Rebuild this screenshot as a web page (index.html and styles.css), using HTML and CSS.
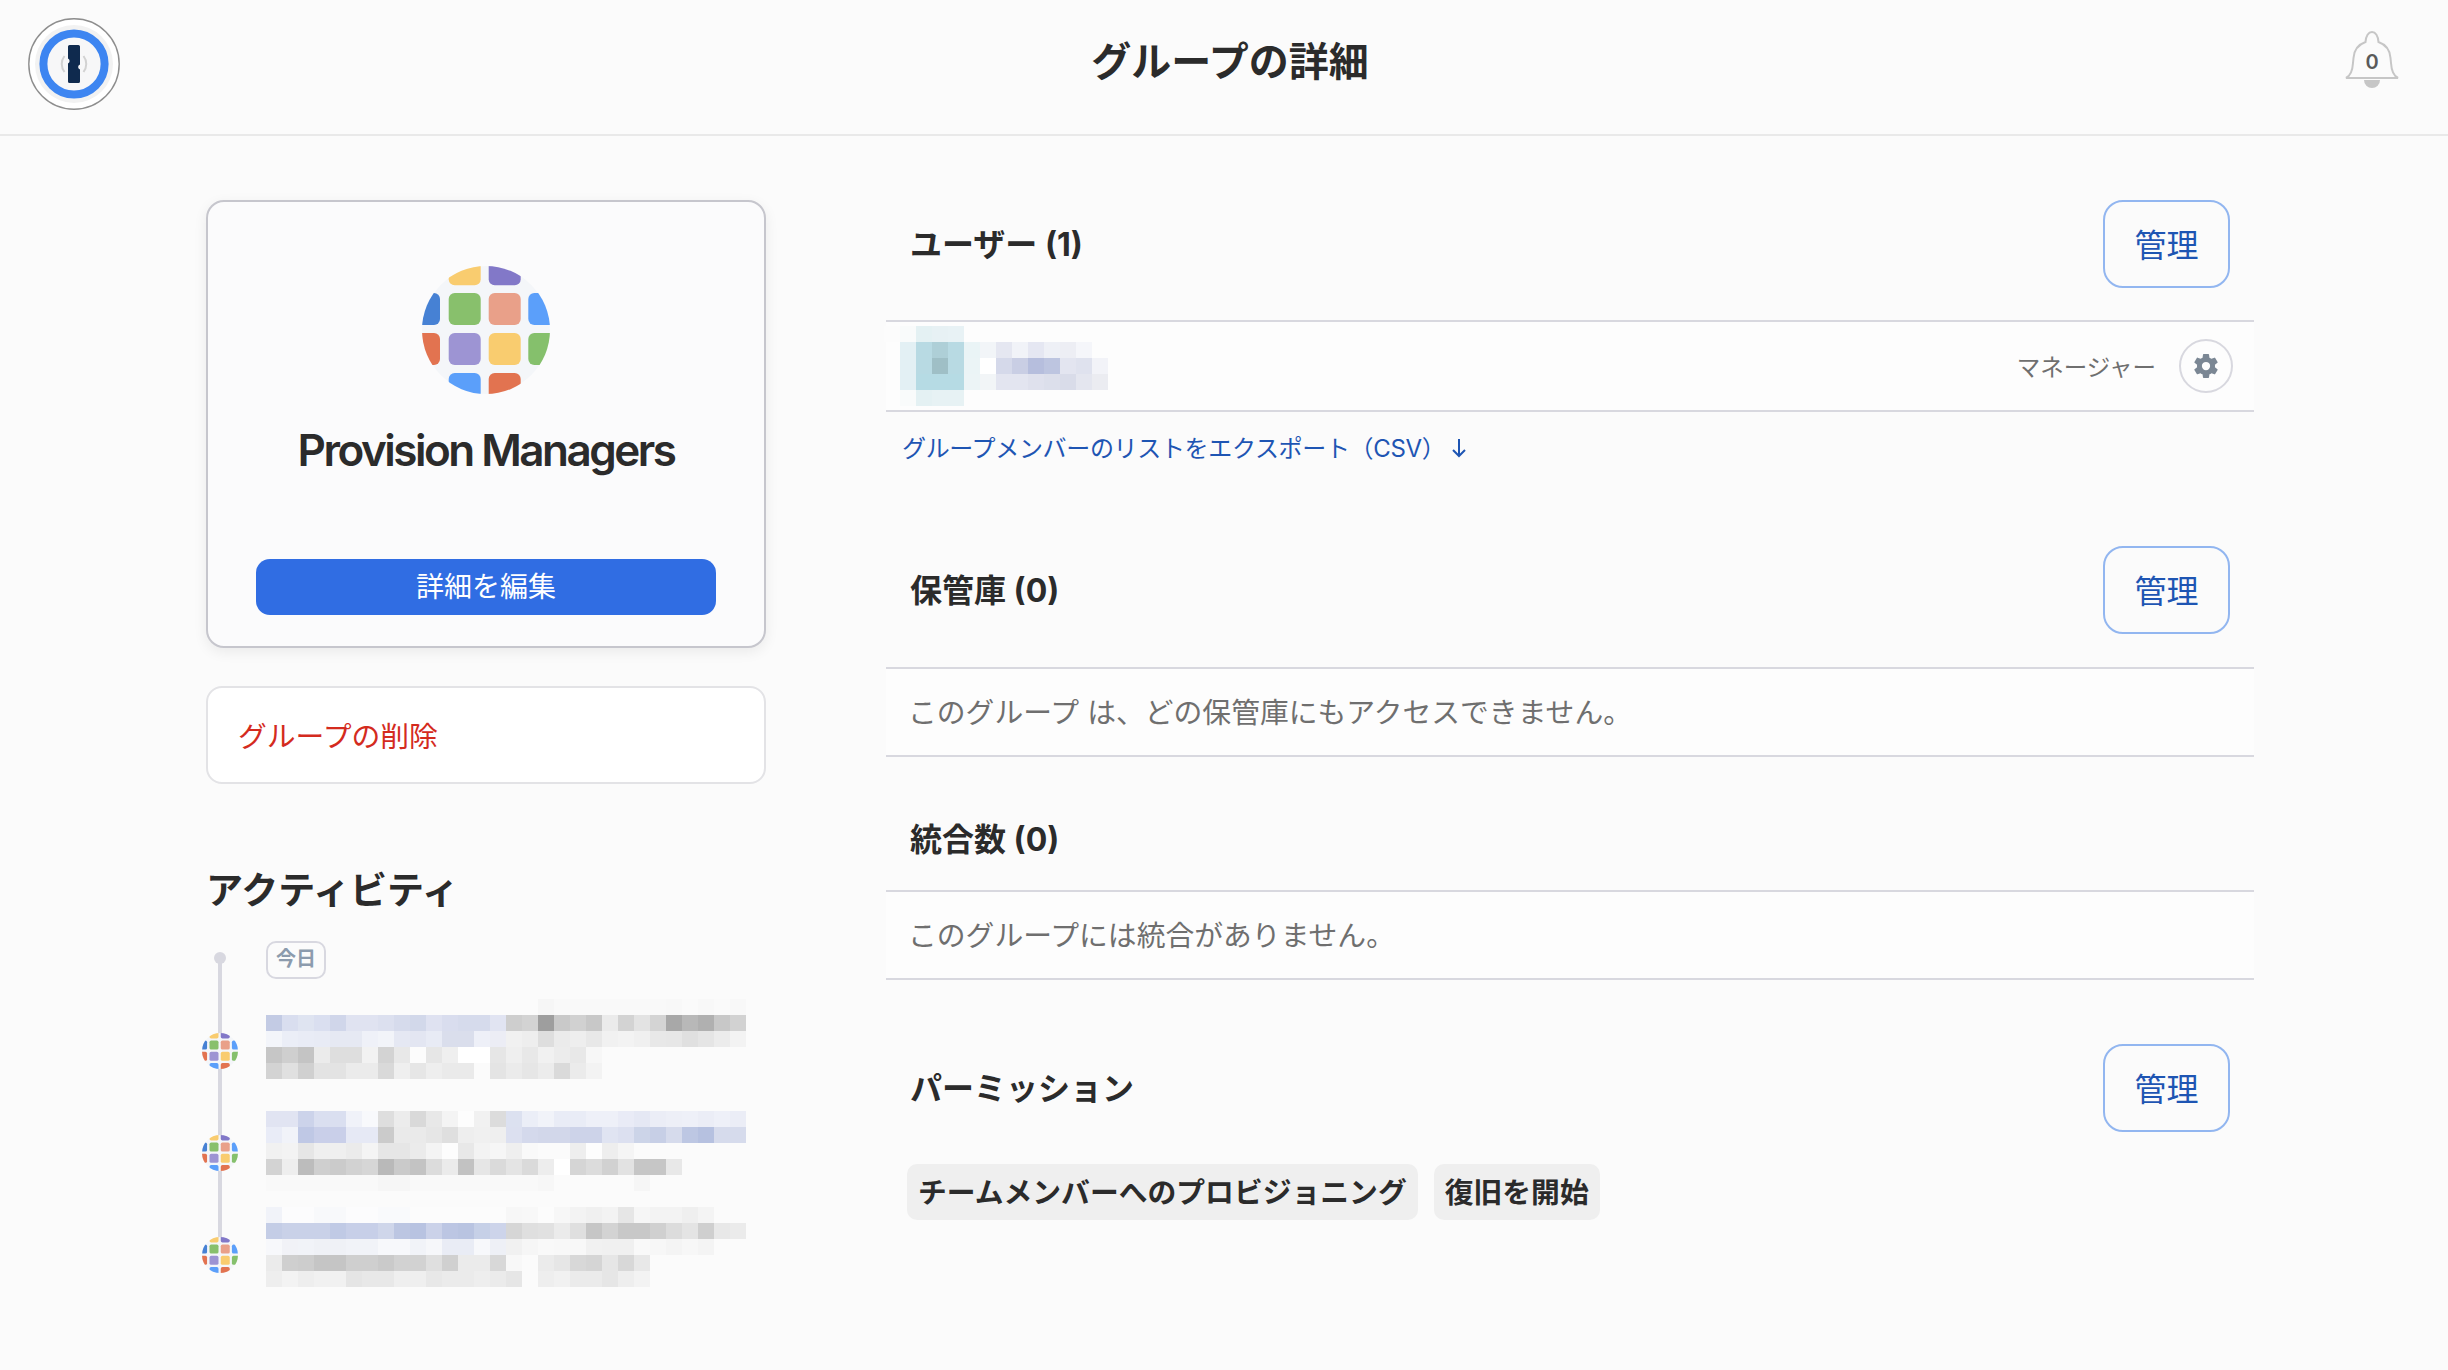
FILE: index.html
```html
<!DOCTYPE html>
<html lang="ja">
<head>
<meta charset="utf-8">
<title>グループの詳細</title>
<link rel="stylesheet" href="styles.css">
</head>
<body>
<svg class="defs" width="0" height="0" aria-hidden="true">
  <defs>
    <clipPath id="globe-clip"><circle cx="64" cy="64" r="64"/></clipPath>
    <symbol id="globe" viewBox="0 0 128 128">
      <g clip-path="url(#globe-clip)">
        <circle cx="64" cy="64" r="64" fill="#f4f6f9"/>
        <rect x="26.7" y="-13" width="32" height="32.3" rx="6" fill="#f9cc6f"/>
        <rect x="66.7" y="-13" width="32" height="32.3" rx="6" fill="#8278c8"/>
        <rect x="-14" y="27" width="32" height="32" rx="6" fill="#4681d4"/>
        <rect x="26.7" y="27" width="32" height="32" rx="6" fill="#88c06c"/>
        <rect x="66.7" y="27" width="32" height="32" rx="6" fill="#e9a089"/>
        <rect x="106.3" y="27" width="32" height="32" rx="6" fill="#5b9ffa"/>
        <rect x="-14" y="67" width="32" height="32" rx="6" fill="#e27350"/>
        <rect x="26.7" y="67" width="32" height="32" rx="6" fill="#9d94d3"/>
        <rect x="66.7" y="67" width="32" height="32" rx="6" fill="#f9cc6f"/>
        <rect x="106.3" y="67" width="32" height="32" rx="6" fill="#85c06c"/>
        <rect x="26.7" y="107" width="32" height="32" rx="6" fill="#5b9ffa"/>
        <rect x="66.7" y="107" width="32" height="32" rx="6" fill="#e27350"/>
      </g>
    </symbol>
  </defs>
</svg>

<header class="topbar">
  <svg class="logo" viewBox="0 0 92 92" aria-label="1Password">
    <circle cx="46" cy="46" r="45.2" fill="#fff" stroke="#8e8e8e" stroke-width="1.4"/>
    <circle cx="46" cy="46" r="39" fill="#f2f2f2"/>
    <circle cx="46" cy="46" r="30.6" fill="#f7f7f8" stroke="#3d85f1" stroke-width="8"/>
    <path d="M36.5 38a13 13 0 0 0 0 16M55.5 38a13 13 0 0 1 0 16" fill="none" stroke="#d2d2d2" stroke-width="2"/>
    <path d="M41.6 27h8.8a1.6 1.6 0 0 1 1.6 1.6V46.6a2.6 2.6 0 0 0 0 5V63.4a1.6 1.6 0 0 1-1.6 1.6h-8.8a1.6 1.6 0 0 1-1.6-1.6V45.4a2.6 2.6 0 0 0 0-4.8V28.6a1.6 1.6 0 0 1 1.6-1.6z" fill="#0f2a4e"/>
  </svg>
  <h1 class="page-title">グループの詳細</h1>
  <div class="bell">
    <svg class="bell-icon" viewBox="0 0 64 64" aria-hidden="true">
      <path d="M6 50c4-2 6.500-7 7-15l.5-5c.5-8 5-13.500 12-16 .3-6 3-10 6.500-10s6.200 4 6.500 10c7 2.500 11.500 8 12 16l.5 5c.5 8 3 13 7 15z" fill="none" stroke="#c6c6c6" stroke-width="2"/>
      <path d="M24 52h16a8 8 0 0 1-16 0z" fill="#c6c6c6"/>
    </svg>
    <span class="bell-count">0</span>
  </div>
</header>

<main class="page">
  <aside class="side">
    <section class="group-card">
      <svg class="group-globe"><use href="#globe"/></svg>
      <h2 class="group-name">Provision Managers</h2>
      <button class="btn-primary">詳細を編集</button>
    </section>
    <div class="danger-card">グループの削除</div>
    <h2 class="activity-title">アクティビティ</h2>
    <div class="timeline">
      <div class="rail">
        <span class="rail-dot"></span>
        <svg class="rail-avatar"><use href="#globe"/></svg>
        <svg class="rail-avatar"><use href="#globe"/></svg>
        <svg class="rail-avatar"><use href="#globe"/></svg>
      </div>
      <div class="events">
        <span class="day-badge">今日</span>
        <div class="event event-1">
          <div class="px a0"></div><div class="px a1"></div><div class="px a2"></div><div class="px a3"></div><div class="px a4"></div>
        </div>
        <div class="event event-2">
          <div class="px b0"></div><div class="px b1"></div><div class="px b2"></div><div class="px b3"></div><div class="px b4"></div>
        </div>
        <div class="event event-3">
          <div class="px c0"></div><div class="px c1"></div><div class="px c2"></div><div class="px c3"></div><div class="px c4"></div>
        </div>
      </div>
    </div>
  </aside>

  <div class="content">
    <section class="sec sec-users">
      <div class="sec-head">
        <h3 class="sec-title">ユーザー (1)</h3>
        <a class="btn-outline">管理</a>
      </div>
      <div class="row row-user">
        <div class="user-blur">
          <div class="px u0"></div><div class="px u1"></div><div class="px u2"></div><div class="px u3"></div><div class="px u4"></div>
        </div>
        <span class="role">マネージャー</span>
        <span class="gear-btn">
          <svg class="gear" viewBox="0 0 24 24" aria-hidden="true"><path fill-rule="evenodd" d="M19.14 12.94c.04-.3.06-.61.06-.94 0-.32-.02-.64-.07-.94l2.03-1.58a.49.49 0 0 0 .12-.61l-1.92-3.32a.488.488 0 0 0-.59-.22l-2.39.96c-.5-.38-1.03-.7-1.62-.94l-.36-2.54a.484.484 0 0 0-.48-.41h-3.84c-.24 0-.43.17-.47.41l-.36 2.54c-.59.24-1.13.57-1.62.94l-2.39-.96c-.22-.08-.47 0-.59.22L2.74 8.87c-.12.21-.08.47.12.61l2.03 1.58c-.05.3-.09.63-.09.94s.02.64.07.94l-2.03 1.58a.49.49 0 0 0-.12.61l1.92 3.32c.12.22.37.29.59.22l2.39-.96c.5.38 1.03.7 1.62.94l.36 2.54c.05.24.24.41.48.41h3.84c.24 0 .44-.17.47-.41l.36-2.54c.59-.24 1.13-.56 1.62-.94l2.39.96c.22.08.47 0 .59-.22l1.92-3.32c.12-.22.07-.47-.12-.61l-2.01-1.58zM12 15.3a3.300 3.300 0 1 1 0-6.600 3.300 3.300 0 0 1 0 6.600z"/></svg>
        </span>
      </div>
      <a class="export-link">グループメンバーのリストをエクスポート（CSV）<svg class="arrow" viewBox="0 0 16 20" aria-hidden="true"><path d="M8 1v17M2 12l6 6 6-6" fill="none" stroke="currentColor" stroke-width="2"/></svg></a>
    </section>

    <section class="sec sec-vaults">
      <div class="sec-head">
        <h3 class="sec-title">保管庫 (0)</h3>
        <a class="btn-outline">管理</a>
      </div>
      <div class="row row-text">このグループ は、どの保管庫にもアクセスできません。</div>
    </section>

    <section class="sec sec-integrations">
      <div class="sec-head sec-head-plain">
        <h3 class="sec-title">統合数 (0)</h3>
      </div>
      <div class="row row-text">このグループには統合がありません。</div>
    </section>

    <section class="sec sec-perms">
      <div class="sec-head">
        <h3 class="sec-title">パーミッション</h3>
        <a class="btn-outline">管理</a>
      </div>
      <div class="chips">
        <span class="chip">チームメンバーへのプロビジョニング</span>
        <span class="chip">復旧を開始</span>
      </div>
    </section>
  </div>
</main>
</body>
</html>
```
FILE: styles.css
```css
* { box-sizing: border-box; }
html, body { margin: 0; padding: 0; }
body {
  background: #fbfbfb;
  color: #2b2b2b;
  font-family: Inter, "Noto Sans CJK JP", sans-serif;
  overflow: hidden;
  height: 1370px;
}
h1, h2, h3 { margin: 0; }
.defs { position: absolute; }

/* top bar */
.topbar {
  height: 136px;
  border-bottom: 2px solid #e9e9e9;
  display: flex;
  align-items: center;
  justify-content: space-between;
  padding: 0 44px 10px 28px;
}
.logo { width: 92px; height: 92px; margin-top: 4px; flex: none; }
.page-title { font-size: 40px; line-height: 56px; font-weight: 700; }
.bell { position: relative; width: 64px; height: 64px; margin-top: -4px; flex: none; }
.bell-icon { width: 64px; height: 64px; display: block; }
.bell-count {
  position: absolute;
  left: 0; right: 0; top: 22px;
  text-align: center;
  font-size: 20px;
  line-height: 24px;
  font-weight: 600;
  color: #5a5a5a;
}

/* layout */
.page { display: flex; gap: 120px; padding: 64px 194px 0 206px; }
.side { width: 560px; flex: none; }
.content { width: 1368px; flex: none; }

/* left column */
.group-card {
  height: 448px;
  border: 2px solid #c6c6cd;
  border-radius: 18px;
  background: #fbfbfc;
  box-shadow: 0 4px 14px rgba(0, 0, 0, .07);
  padding: 64px 48px 0;
  display: flex;
  flex-direction: column;
  align-items: center;
}
.group-globe { width: 128px; height: 128px; display: block; flex: none; }
.group-name {
  margin-top: 28px;
  font-size: 44px;
  line-height: 56px;
  font-weight: 600;
  letter-spacing: -2.5px;
  white-space: nowrap;
}
.btn-primary {
  margin-top: 81px;
  width: 460px;
  height: 56px;
  border: 0;
  border-radius: 14px;
  background: #306de3;
  color: #fff;
  font: 400 28px/56px Inter, "Noto Sans CJK JP", sans-serif;
  padding: 0;
}
.danger-card {
  margin-top: 38px;
  height: 98px;
  border: 2px solid #e3e3e6;
  border-radius: 16px;
  background: #fff;
  padding: 0 30px 2px;
  display: flex;
  align-items: center;
  color: #d42b1e;
  font-size: 28.8px;
}
.activity-title {
  margin-top: 83px;
  font-size: 37px;
  line-height: 48px;
  font-weight: 700;
}
.timeline { display: flex; margin: 27px 0 0 -4px; gap: 28px; }
.rail {
  position: relative;
  width: 36px;
  flex: none;
  display: flex;
  flex-direction: column;
  align-items: center;
  padding-top: 10px;
  gap: 66px;
}
.rail::before {
  content: "";
  position: absolute;
  left: 16px;
  top: 16px;
  width: 4px;
  height: 297px;
  background: #d8d8e0;
}
.rail-dot {
  position: relative;
  width: 12px;
  height: 12px;
  border-radius: 50%;
  background: #d8d8e0;
  margin-bottom: 3px;
}
.rail-avatar { position: relative; width: 36px; height: 36px; display: block; flex: none; }
.events { width: 480px; flex: none; }
.day-badge {
  display: block;
  width: 60px;
  height: 38px;
  margin-top: -1px;
  border: 2px solid #d8d8e0;
  border-radius: 10px;
  color: #8c9bad;
  font-size: 20px;
  line-height: 32px;
  font-weight: 700;
  text-align: center;
}
.event-1 { margin-top: 20px; }
.event-2 { margin-top: 32px; }
.event-3 { margin-top: 16px; }
.px { height: 16px; }

/* pixelated (redacted) activity rows */
.a0 { background: linear-gradient(90deg, transparent 0 272px, #f6f6f6 0 288px, #f9f9f9 0 400px, #f8f8f8 0 416px, #fafafa 0 432px, #f8f8f8 0 448px, #fafafa 0 464px, #f8f8f8 0 480px); }
.a1 { background: linear-gradient(90deg, #c3cbe4 0 16px, #d9deef 0 32px, #dfe4f1 0 48px, #dadff0 0 64px, #d0d6ea 0 80px, #e0e3f1 0 112px, #dce0ef 0 128px, #d6dbec 0 144px, #d2d8ea 0 160px, #dfe2f1 0 176px, #d9ddee 0 192px, #d6dbec 0 224px, #e1e4f2 0 240px, #cecece 0 256px, #d3d3d3 0 272px, #9e9e9e 0 288px, #c9c9c9 0 304px, #d1d1d1 0 320px, #c8c8c8 0 336px, #ebebeb 0 352px, #d3d3d3 0 368px, #e3e3e3 0 384px, #d4d4d4 0 400px, #a8a8a8 0 416px, #b8b8b8 0 432px, #b0b0b0 0 448px, #c8c8c8 0 464px, #d2d2d2 0 480px); }
.a2 { background: linear-gradient(90deg, #f3f5fa 0 16px, #ebeef7 0 32px, #e9ecf6 0 48px, #e8ebf5 0 64px, #e6e9f3 0 96px, #eff1f8 0 112px, #f2f4f9 0 128px, #e5e8f3 0 144px, #e3e6f2 0 160px, #e8ebf5 0 176px, #dadeec 0 208px, #eef0f8 0 224px, #ecedf5 0 240px, #f1f1f1 0 256px, #eeeeee 0 272px, #dedede 0 288px, #ebebeb 0 304px, #eeeeee 0 320px, #e8e8e8 0 336px, #f1f1f1 0 352px, #f3f3f3 0 368px, #f0f0f0 0 384px, #e8e8e8 0 400px, #e7e7e7 0 416px, #e0e0e0 0 432px, #e5e5e5 0 448px, #ececec 0 464px, #f3f3f3 0 480px); }
.a3 { background: linear-gradient(90deg, #c6c6c6 0 16px, #cfcfcf 0 32px, #c4c4c4 0 48px, #ebebeb 0 64px, #dedede 0 96px, #f2f2f2 0 112px, #d3d3d3 0 128px, #e8e8e8 0 144px, #fcfcfc 0 160px, #e6e6e6 0 176px, #efefef 0 192px, #ffffff 0 224px, #e6e6e6 0 240px, #efefef 0 256px, #e8e8e8 0 272px, #f1f1f1 0 288px, #ececec 0 304px, #e8e8e8 0 320px, #f7f7f7 0 336px, transparent 0); }
.a4 { background: linear-gradient(90deg, #d3d3d3 0 16px, #e0e0e0 0 32px, #d0d0d0 0 48px, #e3e3e3 0 80px, #ebebeb 0 112px, #d9d9d9 0 128px, #efefef 0 144px, #e6e6e6 0 160px, #eeeeee 0 176px, #eaeaea 0 208px, #fbfbfb 0 224px, #e4e4e4 0 240px, #ebebeb 0 256px, #e6e6e6 0 272px, #ececec 0 288px, #dadada 0 304px, #ebebeb 0 320px, #f3f3f3 0 336px, transparent 0); }
.b0 { background: linear-gradient(90deg, #e1e4f2 0 32px, #ccd3ea 0 48px, #dadff0 0 80px, #f0f2f9 0 96px, #f8f9fc 0 112px, #dedede 0 128px, #ececec 0 144px, #d9d9d9 0 160px, #e8e8e8 0 176px, #f4f4f4 0 192px, #fdfdfd 0 208px, #f1f1f1 0 224px, #dcdcdc 0 240px, #dce1f0 0 256px, #ebeef7 0 272px, #f1f3f9 0 288px, #e9ecf6 0 320px, #eef0f8 0 352px, #e9ebf6 0 368px, #e5e8f4 0 384px, #ebedf6 0 400px, #edeff7 0 416px, #eef0f8 0 432px, #ebedf6 0 448px, #eef0f8 0 464px, #ebedf6 0 480px); }
.b1 { background: linear-gradient(90deg, #e9ecf7 0 16px, #f1f3f9 0 32px, #bfc8e5 0 48px, #c9cfe9 0 80px, #e6e9f5 0 112px, #cbcbcb 0 128px, #eaeaea 0 160px, #e6e6e6 0 176px, #dfdfdf 0 192px, #eeeeee 0 208px, #f0f0f0 0 224px, #efefef 0 240px, #dce0f0 0 256px, #d4d9ec 0 272px, #d2d7ea 0 304px, #cdd3e9 0 336px, #e0e4f2 0 352px, #dce0f0 0 368px, #ccd4e8 0 384px, #c7cfe6 0 400px, #d6dbec 0 416px, #bdc7e3 0 432px, #b6c1e0 0 448px, #d6dbec 0 480px); }
.b2 { background: linear-gradient(90deg, #f1f1f1 0 16px, #f3f3f3 0 32px, #e6e6e6 0 48px, #efefef 0 80px, #ebebeb 0 96px, #f4f4f4 0 112px, #e6e6e6 0 144px, #ebebeb 0 160px, #f4f4f4 0 176px, #fdfdfd 0 192px, #e8e8e8 0 208px, #f3f3f3 0 224px, #f6f6f6 0 240px, #efefef 0 256px, #f9f9f9 0 272px, #fbfbfb 0 304px, #eeeeee 0 320px, #fdfdfd 0 336px, #eeeeee 0 352px, #f5f5f5 0 368px, transparent 0); }
.b3 { background: linear-gradient(90deg, #d3d3d3 0 16px, #eeeeee 0 32px, #bcbcbc 0 48px, #cfcfcf 0 64px, #cbcbcb 0 80px, #d2d2d2 0 96px, #d6d6d6 0 112px, #b9b9b9 0 128px, #cacaca 0 144px, #c3c3c3 0 160px, #dcdcdc 0 176px, #ebebeb 0 192px, #c2c2c2 0 208px, #e6e6e6 0 224px, #dadada 0 240px, #e4e4e4 0 256px, #dadada 0 272px, #ededed 0 288px, #ffffff 0 304px, #d5d5d5 0 320px, #dcdcdc 0 336px, #d1d1d1 0 352px, #e2e2e2 0 368px, #c6c6c6 0 400px, #e8e8e8 0 416px, transparent 0); }
.b4 { background: linear-gradient(90deg, #f9f9f9 0 112px, #f6f6f6 0 144px, #f9f9f9 0 272px, #f7f7f7 0 288px, transparent 0 368px, #f6f6f6 0 384px, transparent 0); }
.c0 { background: linear-gradient(90deg, #f1f3f9 0 16px, #fcfcfd 0 48px, #f8f9fb 0 80px, #fcfcfd 0 112px, #f9fafc 0 144px, #fcfcfc 0 240px, #f7f7f7 0 256px, #f8f8f8 0 272px, #fcfcfc 0 288px, #f7f7f7 0 304px, #f3f3f3 0 320px, #f0f0f0 0 336px, #f3f3f3 0 352px, #e6e6e6 0 368px, #f6f6f6 0 384px, #f3f3f3 0 416px, #efefef 0 432px, #f4f4f4 0 448px, transparent 0); }
.c1 { background: linear-gradient(90deg, #c4cde6 0 16px, #c9d1e8 0 64px, #c0cae5 0 80px, #c7cfe8 0 112px, #cfd6ea 0 128px, #bcc6e2 0 144px, #b8c3e1 0 160px, #cbd2e9 0 176px, #bcc6e3 0 192px, #b9c4e1 0 208px, #c6d0e7 0 224px, #cdd4ea 0 240px, #d6d6d6 0 256px, #dfdfdf 0 272px, #e1e1e1 0 288px, #ebebeb 0 304px, #dfdfdf 0 320px, #c6c6c6 0 336px, #d3d3d3 0 352px, #c8c8c8 0 384px, #d0d0d0 0 400px, #dcdcdc 0 416px, #e4e4e4 0 432px, #cfcfcf 0 448px, #e8e8e8 0 464px, #ebebeb 0 480px); }
.c2 { background: linear-gradient(90deg, #f7f8fb 0 16px, #f1f2f7 0 32px, #f1f3f8 0 48px, #eff1f6 0 80px, #f1f3f8 0 112px, #f7f8fb 0 144px, #f1f3f8 0 160px, #f6f7fa 0 176px, #e9ecf5 0 208px, #f7f8fb 0 224px, #eef0f6 0 240px, #f1f1f1 0 256px, #f6f6f6 0 272px, #f9f9f9 0 288px, #f8f8f8 0 320px, #f1f1f1 0 336px, #f0f0f0 0 368px, #f9f9f9 0 384px, #f7f7f7 0 400px, #f4f4f4 0 416px, #f7f7f7 0 432px, #f4f4f4 0 448px, transparent 0); }
.c3 { background: linear-gradient(90deg, #ebebeb 0 16px, #cfcfcf 0 32px, #cdcdcd 0 48px, #c5c5c5 0 80px, #cfcfcf 0 112px, #cacaca 0 128px, #d2d2d2 0 160px, #dfdfdf 0 176px, #d0d0d0 0 192px, #ebebeb 0 224px, #d8d8d8 0 240px, #f8f8f8 0 256px, transparent 0 272px, #ebebeb 0 288px, #e6e6e6 0 304px, #d8d8d8 0 320px, #d5d5d5 0 336px, #e6e6e6 0 352px, #d8d8d8 0 368px, #e8e8e8 0 384px, transparent 0); }
.c4 { background: linear-gradient(90deg, #eeeeee 0 16px, #f3f3f3 0 32px, #eeeeee 0 48px, #f1f1f1 0 80px, #e5e5e5 0 96px, #e8e8e8 0 128px, #efefef 0 160px, #e8e8e8 0 176px, #ebebeb 0 208px, #eeeeee 0 224px, #ebebeb 0 240px, #e6e6e6 0 256px, transparent 0 272px, #eeeeee 0 288px, #f1f1f1 0 304px, #ebebeb 0 336px, #e6e6e6 0 352px, #eeeeee 0 368px, #f3f3f3 0 384px, transparent 0); }

/* right column */
.sec-head {
  height: 88px;
  display: flex;
  align-items: center;
  justify-content: space-between;
  padding: 0 24px;
}
.sec-title { font-size: 32px; line-height: 44px; font-weight: 700; padding-top: 2px; }
.btn-outline {
  width: 127px;
  height: 88px;
  border: 2px solid #92b6f0;
  border-radius: 20px;
  color: #1e55b3;
  font-size: 32px;
  display: flex;
  align-items: center;
  justify-content: center;
  padding-bottom: 3px;
}
.row {
  border-top: 2px solid #d8d8df;
  border-bottom: 2px solid #d8d8df;
  background: #fdfdfd;
  display: flex;
  align-items: center;
}
.sec-users .row { margin-top: 32px; }
.row-user { height: 92px; padding-right: 21px; }
.user-blur { width: 240px; flex: none; margin-left: -2px; margin-right: auto; }
.role { font-size: 23.5px; color: #6f6f6f; margin-right: 23px; }
.gear-btn {
  width: 54px;
  height: 54px;
  border: 2px solid #d8d8df;
  border-radius: 50%;
  display: flex;
  align-items: center;
  justify-content: center;
}
.gear { width: 30px; height: 30px; fill: #7b8794; display: block; }
.u0 { background: linear-gradient(90deg, #fcfcfc 0 16px, #f9fbfb 0 32px, #e4f1f3 0 48px, #e7f1f4 0 64px, #e8f2f5 0 80px, transparent 0); }
.u1 { background: linear-gradient(90deg, transparent 0 16px, #e3f0f4 0 32px, #b8dae3 0 48px, #aecfd7 0 64px, #b8dae3 0 80px, #eaf4f6 0 96px, #f2f5f8 0 112px, #e5e7f1 0 128px, #f1f3f8 0 144px, #e5e7f2 0 160px, #eef0f6 0 176px, #edeef4 0 192px, #f5f6fa 0 208px, transparent 0); }
.u2 { background: linear-gradient(90deg, transparent 0 16px, #e3f0f4 0 32px, #b8dae3 0 48px, #9fbfc6 0 64px, #b8dae3 0 80px, #ebf4f6 0 96px, #ffffff 0 112px, #d5d9ea 0 128px, #c9cee4 0 144px, #b6bedd 0 160px, #bdc5e0 0 176px, #e3e5f0 0 192px, #dfe2ee 0 208px, #f2f3f8 0 224px, transparent 0); }
.u3 { background: linear-gradient(90deg, transparent 0 16px, #e3f0f4 0 32px, #b6dbe4 0 80px, #ecf4f6 0 96px, #f2f5f7 0 112px, #e3e5f0 0 144px, #dfe1ed 0 160px, #dcdfeb 0 176px, #d9dce9 0 192px, #e4e6ef 0 208px, #ebecf1 0 224px, transparent 0); }
.u4 { background: linear-gradient(90deg, transparent 0 16px, #f9fbfb 0 32px, #e4f1f3 0 48px, #e7f2f4 0 80px, transparent 0); }
.export-link {
  display: flex;
  align-items: center;
  height: 36px;
  margin-top: 18px;
  padding: 0 0 3px 16px;
  font-size: 24px;
  letter-spacing: -.33px;
  color: #1e55b3;
  white-space: nowrap;
}
.arrow { width: 16px; height: 20px; margin: 3px 0 0 6px; display: block; flex: none; }

.sec-vaults { margin-top: 80px; }
.row-text {
  height: 90px;
  padding: 0 0 3px 22px;
  font-size: 28.8px;
  color: #6f6f6f;
}
.sec-vaults .row { margin-top: 33px; }
.sec-integrations { margin-top: 60px; }
.sec-head-plain { height: 44px; }
.sec-integrations .row { margin-top: 29px; }
.sec-perms { margin-top: 64px; }
.chips { display: flex; gap: 16px; margin: 32px 0 0 21px; }
.chip {
  height: 56px;
  padding: 0 11px;
  background: #efefef;
  border-radius: 10px;
  font-size: 28.8px;
  line-height: 58px;
  font-weight: 700;
  white-space: nowrap;
}
```
